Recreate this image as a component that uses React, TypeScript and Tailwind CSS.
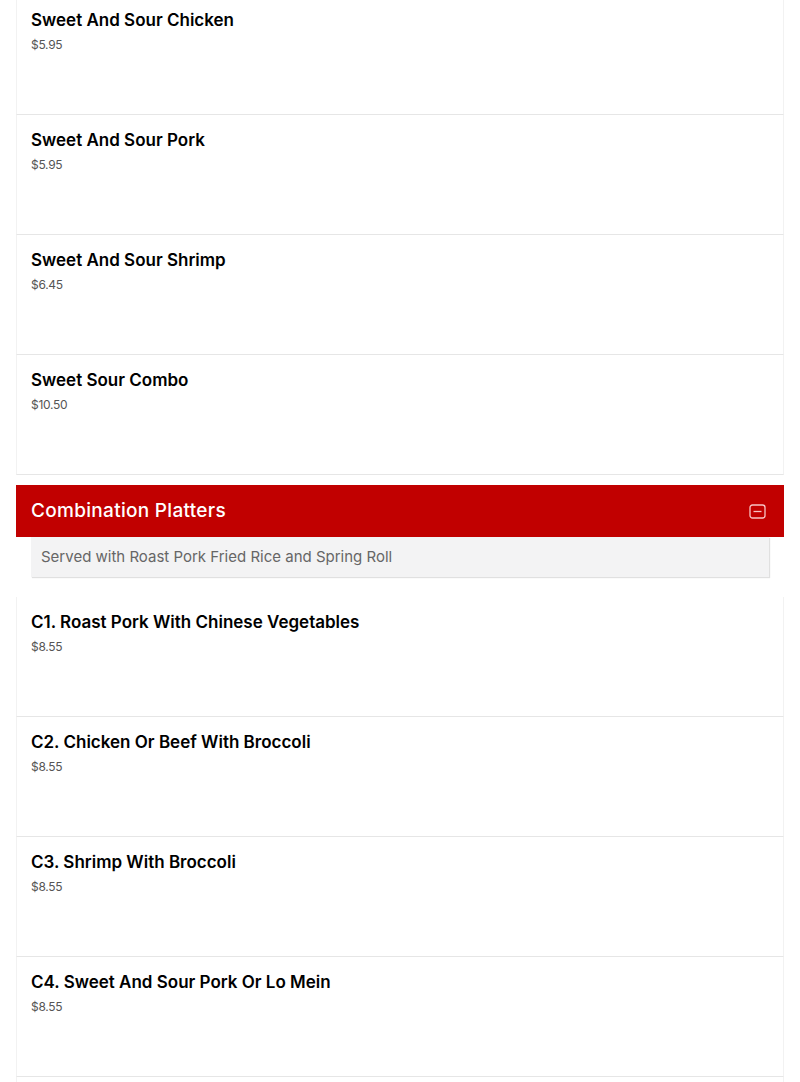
import React from 'react';

type Item = { name: string; price: string };

const sweetSour: Item[] = [
  { name: 'Sweet And Sour Chicken', price: '$5.95' },
  { name: 'Sweet And Sour Pork', price: '$5.95' },
  { name: 'Sweet And Sour Shrimp', price: '$6.45' },
  { name: 'Sweet Sour Combo', price: '$10.50' },
];

const combos: Item[] = [
  { name: 'C1. Roast Pork With Chinese Vegetables', price: '$8.55' },
  { name: 'C2. Chicken Or Beef With Broccoli', price: '$8.55' },
  { name: 'C3. Shrimp With Broccoli', price: '$8.55' },
  { name: 'C4. Sweet And Sour Pork Or Lo Mein', price: '$8.55' },
];

const MenuItem = ({ item }: { item: Item }) => (
  <div className="h-[120px] border-x border-x-[#f2f2f2] border-b border-b-[#e6e6e6] pl-[14px] pr-[15px] pt-[13px]">
    <h3 className="text-[17px] font-semibold leading-[24px] text-black">{item.name}</h3>
    <p className="mt-[5px] text-[12px] leading-[16px] text-[#555] tracking-[-0.3px]">{item.price}</p>
  </div>
);

const CollapseIcon = () => (
  <svg width="17" height="15" viewBox="0 0 17 15" fill="none" stroke="#f7c4c4" strokeWidth="1.3">
    <rect x="1" y="1" width="15" height="13" rx="2.5" />
    <path d="M4.5 7.5h8" />
  </svg>
);

export default function App() {
  return (
    <div
      className="min-h-[1082px] bg-white px-[16px]"
      style={{ fontFamily: '"Inter", "Open Sans", sans-serif' }}
    >
      <div className="-mt-[5px]">
        {sweetSour.map((item) => (
          <MenuItem key={item.name} item={item} />
        ))}
      </div>

      <div className="mt-[10px] flex h-[52px] items-center justify-between bg-[#c10000] pl-[15px] pr-[18px]">
        <h2 className="text-[19px] font-medium tracking-[0.3px] text-white">Combination Platters</h2>
        <CollapseIcon />
      </div>

      <div className="mx-[15px] flex h-[40px] items-center bg-[#f3f3f4] px-[10px] shadow-[1px_1px_1px_rgba(0,0,0,0.12)]">
        <p className="text-[15px] text-[#666]">Served with Roast Pork Fried Rice and Spring Roll</p>
      </div>

      <div className="mt-[20px]">
        {combos.map((item) => (
          <MenuItem key={item.name} item={item} />
        ))}
        <div className="h-[6px] border-x border-x-[#f2f2f2]" />
      </div>
    </div>
  );
}
